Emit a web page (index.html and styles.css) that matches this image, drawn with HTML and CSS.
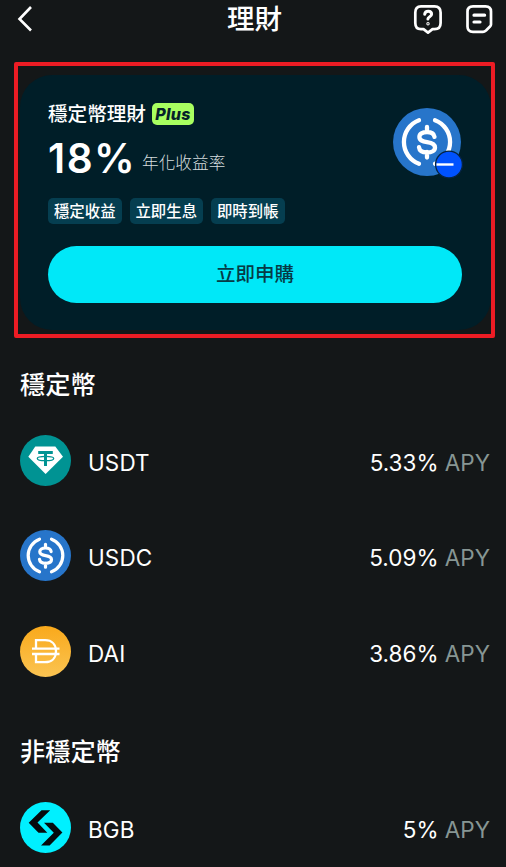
FILE: index.html
```html
<!DOCTYPE html>
<html lang="zh-Hant">
<head>
<meta charset="utf-8">
<meta name="viewport" content="width=device-width, initial-scale=1">
<title>理財</title>
<link rel="stylesheet" href="styles.css">
</head>
<body>
<svg class="defs" width="0" height="0" aria-hidden="true">
  <defs>
    <linearGradient id="gold" x1="0" y1="0" x2="0" y2="1"><stop offset="0" stop-color="#f9a91b"/><stop offset="1" stop-color="#fbc452"/></linearGradient>
    <symbol id="usdc" viewBox="0 0 68 68">
      <circle cx="34" cy="34" r="34" fill="#2775ca"/>
      <g fill="none" stroke="#fff" stroke-width="4.300" stroke-linecap="round" stroke-linejoin="round">
        <path d="M26 12.2A23.3 23.3 0 0 0 26 55.8M42 12.2A23.3 23.3 0 0 1 42 55.8"/>
        <path d="M34 19v5M34 44v5.500M41.500 28.800C41 25.600 38.300 24 34 24c-4.700 0-7.600 1.900-7.600 5 0 3.700 3.300 4.400 7.600 5.100 4.700.7 8 1.700 8 5.300 0 3.200-3.200 5-8 5-4.700 0-7.600-1.800-8-5.200"/>
      </g>
    </symbol>
  </defs>
</svg>
<header class="topbar">
  <svg class="back" viewBox="0 0 20 28" fill="none" stroke="#fff" stroke-width="2.600"><path d="M16 3 4.500 15l11.500 11.500"/></svg>
  <h1 class="page-title">理財</h1>
  <div class="actions">
    <svg class="action" viewBox="0 0 30 32" fill="none" stroke="#fff" stroke-width="2.700" stroke-linejoin="round" stroke-linecap="round">
      <path d="M8 3.300h13.500Q27.600 3.300 27.600 9.500V20q0 6.200-6.100 6.200h-2L15 29.600l-4.500-3.400H8Q2.300 26.200 2.300 20V9.500Q2.300 3.300 8 3.300Z"/>
      <path d="M11.700 11.300c.5-4.100 6.900-3.800 6.900 0 0 2.600-3.700 2.300-3.700 4.700" stroke-width="3"/>
      <circle cx="15" cy="20.800" r=".5" stroke-width="2.400"/>
    </svg>
    <svg class="action" viewBox="0 0 30 32" fill="none" stroke="#fff" stroke-width="2.700" stroke-linejoin="round" stroke-linecap="round">
      <path d="M9 3.300h12.500Q27 3.300 27 8.500V21.500Q27 22.500 26 23.500L22 27.500Q20.500 28.800 19 28.800H9Q3.500 28.800 3.500 23.500V8.500Q3.500 3.300 9 3.300Z"/>
      <path d="M10 12.200h10.600M10 19h6" stroke-width="3.200"/>
    </svg>
  </div>
</header>

<main>
  <div class="highlight">
    <section class="card">
      <div class="card-top">
        <div class="offer">
          <div class="offer-name">穩定幣理財<span class="plus">Plus</span></div>
          <div class="rate"><strong>18%</strong><span>年化收益率</span></div>
        </div>
        <svg class="offer-coin" viewBox="0 0 70 72">
          <use href="#usdc" x="0" y="0" width="68" height="68"/>
          <circle cx="56" cy="56.500" r="13.400" fill="#0052ff" stroke="#062442" stroke-width="1.300"/>
          <path d="M43.500 56.500H60.500" stroke="#fff" stroke-width="2.400"/>
        </svg>
      </div>
      <div class="tags"><span>穩定收益</span><span>立即生息</span><span>即時到帳</span></div>
      <button class="subscribe">立即申購</button>
    </section>
  </div>

  <section class="group">
    <h2>穩定幣</h2>
    <div class="row">
      <svg class="coin" viewBox="0 0 51 51">
        <circle cx="25.500" cy="25.500" r="25.500" fill="#009393"/>
        <path d="M15.300 11.500h20L43 21.700 25.600 39 8.300 21.700Z" fill="#fff"/>
        <path d="M18.200 17.500h14.600M25.500 17.500v13.500" stroke="#009393" stroke-width="3" fill="none"/>
        <ellipse cx="25.500" cy="23.500" rx="8.200" ry="2.200" fill="none" stroke="#009393" stroke-width="1.300"/>
      </svg>
      <span class="name">USDT</span><span class="apy">5.33% <i>APY</i></span>
    </div>
    <div class="row">
      <svg class="coin"><use href="#usdc" width="51" height="51"/></svg>
      <span class="name">USDC</span><span class="apy">5.09% <i>APY</i></span>
    </div>
    <div class="row">
      <svg class="coin" viewBox="0 0 51 51">
        <circle cx="25.500" cy="25.500" r="25.500" fill="url(#gold)"/>
        <path d="M16 21.500v-7.300h9c7 0 11 4.500 11 11s-4 11-11 11h-9v-7.300M12 22.700h27.500M12 28h27.500" fill="none" stroke="#fff" stroke-width="2.300"/>
      </svg>
      <span class="name">DAI</span><span class="apy">3.86% <i>APY</i></span>
    </div>
  </section>

  <section class="group group-volatile">
    <h2>非穩定幣</h2>
    <div class="row">
      <svg class="coin" viewBox="0 0 51 51">
        <circle cx="25.500" cy="25.500" r="25.500" fill="#00f0ff"/>
        <path d="M21.500 8.200h8.700L17.500 20.500 27.300 30.700H18.500L8.700 20.700ZM24 20.700h8.800L42.400 30.500 29.600 43.500H21L33.800 30.700Z" fill="#050b0d"/>
      </svg>
      <span class="name">BGB</span><span class="apy">5% <i>APY</i></span>
    </div>
  </section>
</main>
</body>
</html>
```
FILE: styles.css
```css
* { box-sizing: border-box; }

body {
  margin: 0;
  height: 867px;
  overflow: hidden;
  background: #141718;
  color: #fff;
  font-family: Inter, "Noto Sans CJK TC", sans-serif;
}

.defs { display: block; }

.topbar {
  display: grid;
  grid-template-columns: 1fr auto 1fr;
  align-items: start;
  height: 62px;
  padding: 3px 12px 0 15px;
}

.back { width: 20px; height: 28px; margin-top: 1px; }

.page-title {
  margin: 0;
  font-size: 27.500px;
  line-height: 33px;
  font-weight: 500;
}

.actions { display: flex; justify-content: flex-end; gap: 21px; }
.action { width: 30px; height: 32px; }

.highlight {
  width: 481px;
  height: 276px;
  margin-left: 14px;
  padding: 9px 0 0 2px;
  border: 4px solid #ec1c24;
  border-radius: 2px;
}

.card {
  width: 471px;
  height: 255px;
  padding: 26px 29px 0 28px;
  border-radius: 32px;
  background: #001e28;
}

.card-top { display: flex; justify-content: space-between; height: 97px; }

.offer-name {
  display: flex;
  align-items: center;
  gap: 6px;
  height: 26px;
  font-size: 19.600px;
  line-height: 26px;
  font-weight: 500;
}

.plus {
  width: 42px;
  height: 22px;
  border-radius: 5px;
  background: #a8ff60;
  color: #06212a;
  text-align: center;
  font-size: 16px;
  line-height: 22px;
  font-weight: 800;
  font-style: italic;
  letter-spacing: .3px;
}

.rate { display: flex; align-items: flex-start; height: 50px; margin-top: 6px; }
.rate strong {
  width: 94px;
  font-size: 40.500px;
  line-height: 51px;
  font-weight: 600;
  letter-spacing: 1.500px;
}
.rate span {
  margin-top: 18px;
  font-size: 16.700px;
  line-height: 24px;
  font-weight: 300;
  color: #d4dcde;
}

.offer-coin { width: 70px; height: 72px; margin-top: 7px; margin-right: -1px; }

.tags { display: flex; gap: 8px; }
.tags span {
  width: 73.500px;
  height: 26px;
  border-radius: 5px;
  background: #053e50;
  text-align: center;
  font-size: 15.400px;
  line-height: 28px;
  font-weight: 500;
}

.subscribe {
  display: block;
  width: 414px;
  height: 57px;
  margin-top: 22px;
  padding: 0;
  border: 0;
  border-radius: 29px;
  background: #00e8f8;
  color: #063b46;
  font: 500 19.500px/57px Inter, "Noto Sans CJK TC", sans-serif;
}

.group { padding: 28px 16px 0 20px; }
.group-volatile { padding-top: 34px; }

.group h2 {
  height: 37px;
  margin: 0 0 9.500px;
  font-size: 25.200px;
  line-height: 38px;
  font-weight: 500;
}

.row { display: flex; align-items: center; height: 95.500px; }
.coin { flex: none; width: 51px; height: 51px; }

.name, .apy { font-size: 22.500px; line-height: 30px; padding-top: 5px; }
.name { margin-left: 17px; letter-spacing: .1px; }
.apy { margin-left: auto; }
.apy i { font-style: normal; color: #879694; }
```
